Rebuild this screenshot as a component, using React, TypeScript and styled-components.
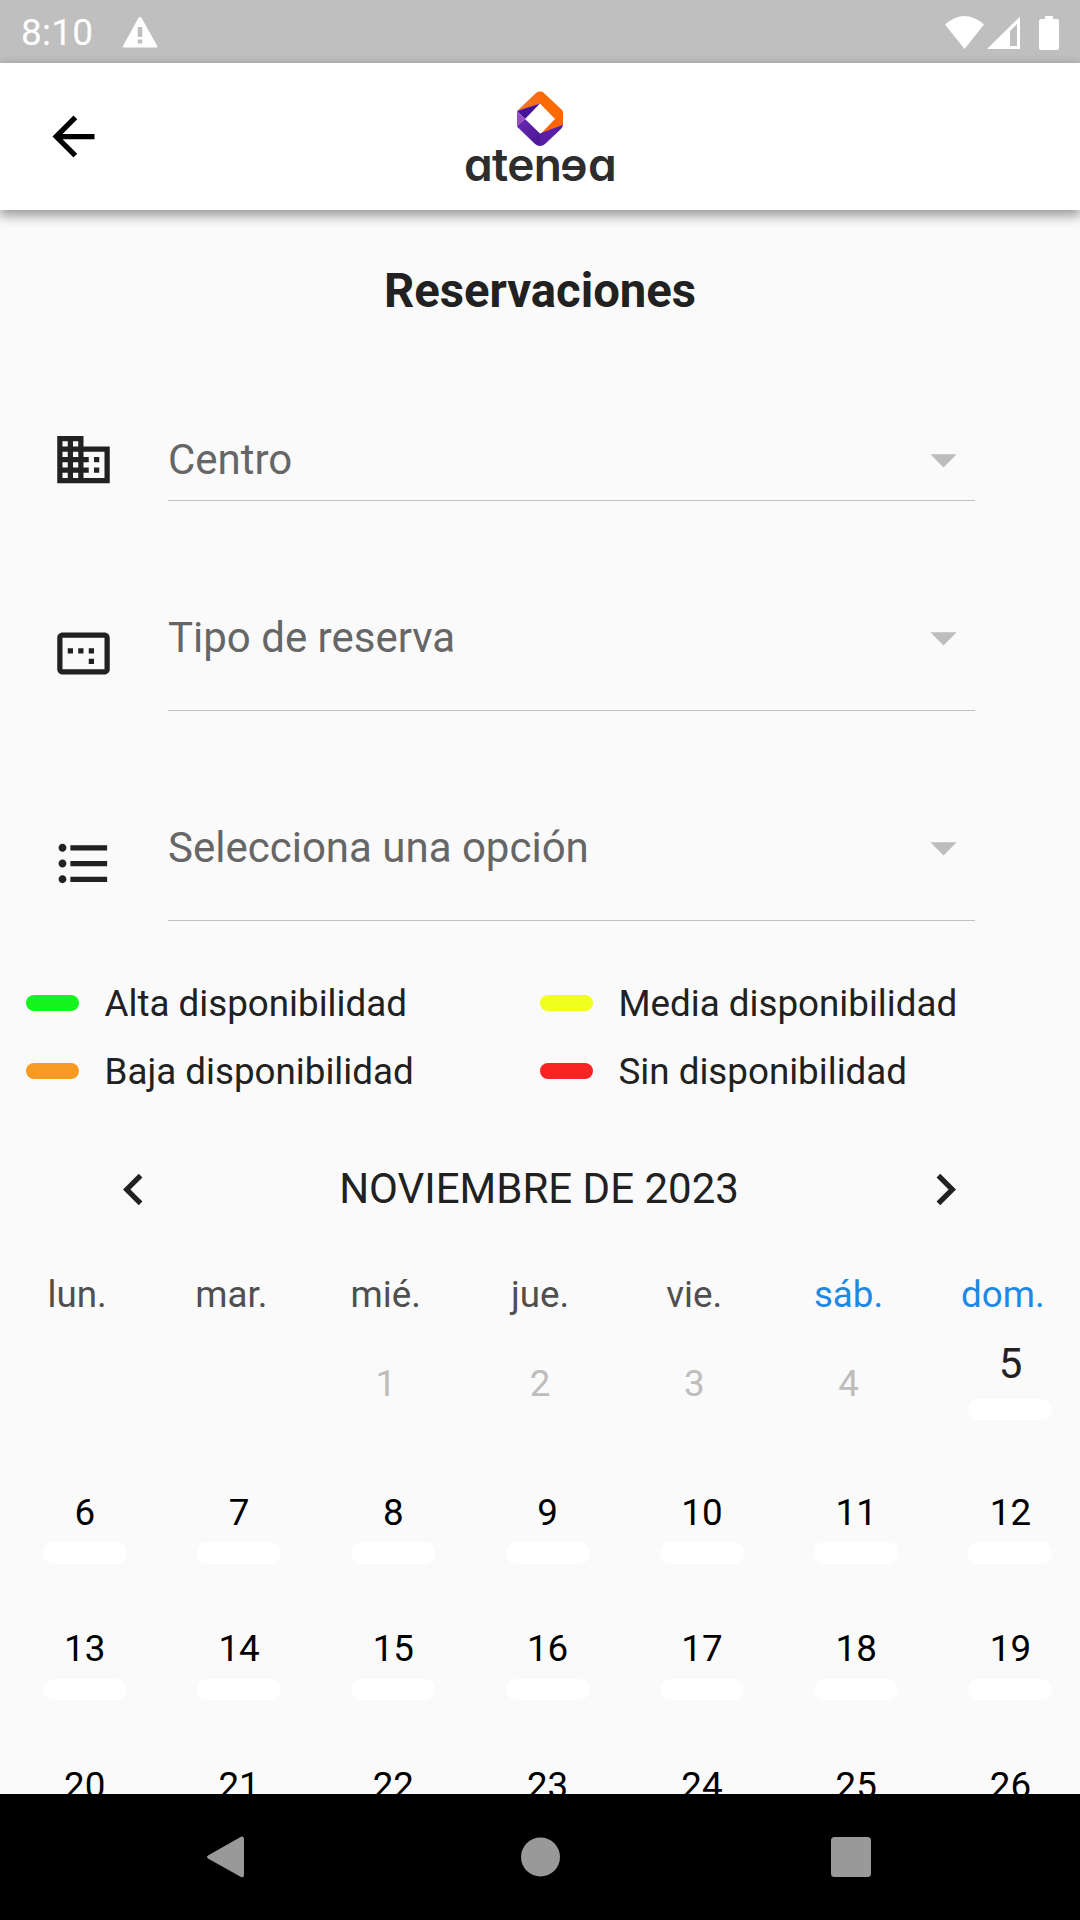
import React from "react";
import styled, { createGlobalStyle } from "styled-components";

const GlobalStyle = createGlobalStyle`
  html, body { margin: 0; padding: 0; background: #fafafa; }
  * { box-sizing: border-box; }
`;

const Screen = styled.div`
  display: flex;
  flex-direction: column;
  width: 1080px;
  height: 1920px;
  overflow: hidden;
  background: #fafafa;
  color: #212121;
  font-family: Roboto, "Liberation Sans", sans-serif;
`;

const StatusBar = styled.header`
  display: flex;
  align-items: center;
  flex: none;
  height: 63px;
  padding: 3px 21px 0;
  background: #bfbfbf;
  color: #fff;
`;

const Clock = styled.span`
  width: 101px;
  font-size: 37px;
  line-height: 60px;
  letter-spacing: 0.2px;
`;

const StatusIcons = styled.div`
  display: flex;
  align-items: center;
  margin-left: auto;
  padding-bottom: 3px;
`;

const AppBar = styled.div`
  display: grid;
  grid-template-columns: 1fr auto 1fr;
  align-items: center;
  flex: none;
  height: 147px;
  padding: 0 42px;
  background: #fff;
  color: #000;
  box-shadow: 0 5px 11px 1px rgba(0, 0, 0, 0.38);
  z-index: 1;
`;

const IconButton = styled.button`
  display: flex;
  width: 63px;
  height: 63px;
  padding: 0;
  border: 0;
  background: none;
  color: inherit;
`;

const Brand = styled.div`
  display: flex;
  flex-direction: column;
  align-items: center;
  width: 160px;
  height: 147px;
  padding-top: 28px;
`;

const Wordmark = styled.div`
  display: flex;
  justify-content: center;
  height: 40px;
  margin-top: -3px;
  color: #2d2d2d;
  font-family: Inter, "Liberation Sans", sans-serif;
  font-size: 46px;
  font-weight: 600;
  line-height: 40px;
  letter-spacing: -0.6px;
  font-feature-settings: "cv11";
`;

const Mirrored = styled.span`
  display: inline-block;
  transform: scaleX(-1);
`;

const Content = styled.main`
  flex: 1;
  min-height: 0;
  overflow: hidden;
`;

const Title = styled.h1`
  margin: 51px 0 96px;
  font-size: 47.25px;
  font-weight: 700;
  line-height: 60px;
  text-align: center;
`;

const Field = styled.div<{ $height: number }>`
  display: grid;
  grid-template-columns: 63px 807px;
  grid-template-rows: 100%;
  column-gap: 53px;
  align-items: center;
  height: ${(p) => p.$height}px;
  margin-bottom: 94px;
  padding-left: 52px;
`;

const Select = styled.div`
  display: flex;
  justify-content: space-between;
  align-items: flex-start;
  height: 100%;
  border-bottom: 1px solid #c2c2c2;
`;

const Placeholder = styled.span`
  color: #666;
  font-size: 42px;
  line-height: 85px;
`;

const ArrowSlot = styled.span`
  display: flex;
  align-items: center;
  height: 84px;
  color: #bdbdbd;
`;

const Legend = styled.div`
  display: grid;
  grid-template-columns: 514px 1fr;
  grid-auto-rows: 68px;
  margin-top: -46px;
  padding-left: 26px;
`;

const LegendItem = styled.div`
  display: flex;
  align-items: center;
  gap: 26px;
  font-size: 36.75px;
`;

const Swatch = styled.span<{ $color: string }>`
  width: 52.5px;
  height: 16px;
  border-radius: 8px;
  background: ${(p) => p.$color};
`;

const MonthBar = styled.div`
  display: flex;
  align-items: center;
  justify-content: space-between;
  height: 84px;
  margin-top: 42px;
  padding: 0 103px 0 102px;
`;

const MonthName = styled.h2`
  margin: 0;
  padding: 0 1px 2px 0;
  font-size: 42px;
  font-weight: 400;
`;

const Week = styled.div`
  display: grid;
  grid-template-columns: repeat(7, 1fr);
`;

const Weekdays = styled(Week)`
  height: 63px;
  margin-top: 32px;
  line-height: 64px;
  text-align: center;
  font-size: 36.75px;
`;

const Weekday = styled.span<{ $weekend: boolean }>`
  color: ${(p) => (p.$weekend ? "#1e88e5" : "#4f4f4f")};
`;

const Days = styled(Week)`
  grid-auto-rows: 136.5px;
`;

const PastDay = styled.div`
  padding-top: 33px;
  color: #bdbdbd;
  font-size: 36.75px;
  line-height: 50px;
  text-align: center;
`;

const Day = styled.div<{ $today?: boolean }>`
  display: flex;
  flex-direction: column;
  align-items: center;
  gap: ${(p) => (p.$today ? 9.5 : 4.5)}px;
  padding: ${(p) => (p.$today ? 13 : 25.4)}px 0 0 15.25px;
  color: ${(p) => (p.$today ? "#212121" : "#000")};
  font-size: ${(p) => (p.$today ? 42 : 36.75)}px;
  line-height: 50px;
`;

const Availability = styled.span`
  width: 84px;
  height: 21.5px;
  border-radius: 10.5px;
  background: #fff;
`;

const NavBar = styled.nav`
  display: flex;
  align-items: center;
  justify-content: space-between;
  flex: none;
  height: 126px;
  padding: 0 207px 0 206px;
  background: #000;
  color: #999;
`;

type GlyphProps = { d: string; size?: number };

function Glyph({ d, size = 63 }: GlyphProps) {
  return (
    <svg width={size} height={size} viewBox="0 0 24 24" fill="currentColor" aria-hidden>
      <path d={d} />
    </svg>
  );
}

const paths = {
  back: "M20 11H7.83l5.59-5.59L12 4l-8 8 8 8 1.41-1.41L7.83 13H20v-2z",
  business:
    "M12 7V3H2v18h20V7H12zM6 19H4v-2h2v2zm0-4H4v-2h2v2zm0-4H4V9h2v2zm0-4H4V5h2v2zm4 12H8v-2h2v2zm0-4H8v-2h2v2zm0-4H8V9h2v2zm0-4H8V5h2v2zm10 12h-8v-2h2v-2h-2v-2h2v-2h-2V9h8v10zm-2-8h-2v2h2v-2zm0 4h-2v2h2v-2z",
  ratio:
    "M16 10h-2v2h2v-2zm0 4h-2v2h2v-2zm-8-4H6v2h2v-2zm4 0h-2v2h2v-2zm8-6H4c-1.1 0-2 .9-2 2v12c0 1.1.9 2 2 2h16c1.1 0 2-.9 2-2V6c0-1.1-.9-2-2-2zm0 14H4V6h16v12z",
  list: "M4 10.5c-.83 0-1.5.67-1.5 1.5s.67 1.5 1.5 1.5 1.5-.67 1.5-1.5-.67-1.5-1.5-1.5zm0-6c-.83 0-1.5.67-1.5 1.5S3.17 7.5 4 7.5 5.5 6.83 5.5 6 4.83 4.5 4 4.5zm0 12c-.83 0-1.5.68-1.5 1.5s.68 1.5 1.5 1.5 1.5-.68 1.5-1.5-.67-1.5-1.5-1.5zM7 19h14v-2H7v2zm0-6h14v-2H7v2zm0-8v2h14V5H7z",
  drop: "M7 10l5 5 5-5z",
  left: "M15.41 7.41L14 6l-6 6 6 6 1.41-1.41L10.83 12z",
  right: "M10 6L8.59 7.41 13.17 12l-4.58 4.59L10 18l6-6z",
};

function BrandMark() {
  return (
    <svg width="48" height="56" viewBox="0 0 48 56" aria-hidden>
      <defs>
        <linearGradient id="orange" x1="0" y1="0" x2="1" y2="0">
          <stop offset="0" stopColor="#ee7a2c" />
          <stop offset="1" stopColor="#f9690e" />
        </linearGradient>
        <linearGradient id="violet" x1="0" y1="0" x2="1" y2="1">
          <stop offset="0" stopColor="#6a2bb5" />
          <stop offset="1" stopColor="#4a1492" />
        </linearGradient>
      </defs>
      <path d="M1 20L20 2Q24-.8 28 2L24 12.500 8.500 18z" fill="url(#orange)" />
      <path d="M24 .7Q27 .7 29 3L46 19Q47 20 47 22L39 28 24 12.500z" fill="#fb6a05" />
      <path d="M47 21V33.500L25 42.500 39 28z" fill="#ff6400" />
      <path d="M1 20L24 12.500 9 28z" fill="#45129a" />
      <path d="M1 20L9 28 1 35z" fill="#9a4bc0" />
      <path d="M1 35L9 28 24 42.500V55Q21.500 55 19 53L3 37.500Q1 36 1 35z" fill="url(#violet)" />
      <path d="M24 42.500L47 33.500Q47 36 45 38L29 53Q27 55 24 55z" fill="#5a1da6" />
    </svg>
  );
}

const fields = [
  { label: "Centro", icon: paths.business, height: 84 },
  { label: "Tipo de reserva", icon: paths.ratio, height: 116 },
  { label: "Selecciona una opción", icon: paths.list, height: 116 },
];

const levels = [
  { label: "Alta disponibilidad", color: "#14f51e" },
  { label: "Media disponibilidad", color: "#f0ff1e" },
  { label: "Baja disponibilidad", color: "#f79a22" },
  { label: "Sin disponibilidad", color: "#f92323" },
];

const weekdays = ["lun.", "mar.", "mié.", "jue.", "vie.", "sáb.", "dom."];
const TODAY = 5;
const LEADING_BLANKS = 2;

export default function App() {
  return (
    <>
      <GlobalStyle />
      <Screen>
        <StatusBar>
          <Clock>8:10</Clock>
          <svg width="36" height="32" viewBox="0 0 36 32" fill="currentColor" aria-hidden>
            <path
              fillRule="evenodd"
              d="M18 0Q19 0 19.600 1L35.300 29Q35.600 30.500 34.500 30.500H1.500Q.400 30.500 1 29L16.400 1Q17 0 18 0zM15.700 10V20H20.300V10zM15.700 22.500V26.500H20.300V22.500z"
            />
          </svg>
          <StatusIcons>
            <svg width="115" height="36" viewBox="944 12 115 36" fill="currentColor" aria-hidden>
              <path d="M945 22.500Q964.500 5.500 984 22.500L964.500 47z" />
              <path fillRule="evenodd" d="M1020 14.500V47H987zM1017 22L1010 29V44H1017z" />
              <path d="M1045 14H1053V17H1057Q1059 17 1059 19V46Q1059 48 1057 48H1041Q1039 48 1039 46V19Q1039 17 1041 17H1045z" />
            </svg>
          </StatusIcons>
        </StatusBar>
        <AppBar>
          <IconButton aria-label="Atrás">
            <Glyph d={paths.back} />
          </IconButton>
          <Brand>
            <BrandMark />
            <Wordmark>
              <span>aten</span>
              <Mirrored>e</Mirrored>
              <span>a</span>
            </Wordmark>
          </Brand>
        </AppBar>
        <Content>
          <Title>Reservaciones</Title>
          {fields.map((f) => (
            <Field key={f.label} $height={f.height}>
              <Glyph d={f.icon} />
              <Select>
                <Placeholder>{f.label}</Placeholder>
                <ArrowSlot>
                  <Glyph d={paths.drop} />
                </ArrowSlot>
              </Select>
            </Field>
          ))}
          <Legend>
            {levels.map((l) => (
              <LegendItem key={l.label}>
                <Swatch $color={l.color} />
                {l.label}
              </LegendItem>
            ))}
          </Legend>
          <MonthBar>
            <IconButton aria-label="Mes anterior">
              <Glyph d={paths.left} />
            </IconButton>
            <MonthName>NOVIEMBRE DE 2023</MonthName>
            <IconButton aria-label="Mes siguiente">
              <Glyph d={paths.right} />
            </IconButton>
          </MonthBar>
          <Weekdays>
            {weekdays.map((d, i) => (
              <Weekday key={d} $weekend={i > 4}>
                {d}
              </Weekday>
            ))}
          </Weekdays>
          <Days>
            {Array.from({ length: LEADING_BLANKS }, (_, i) => (
              <span key={`blank-${i}`} />
            ))}
            {Array.from({ length: 26 }, (_, i) => i + 1).map((n) =>
              n < TODAY ? (
                <PastDay key={n}>{n}</PastDay>
              ) : (
                <Day key={n} $today={n === TODAY}>
                  {n}
                  <Availability />
                </Day>
              )
            )}
          </Days>
        </Content>
        <NavBar>
          <svg width="42" height="42" viewBox="0 0 42 42" fill="currentColor" aria-hidden>
            <path d="M2 19.500L35 .700Q38 -.500 38 3V39Q38 42 35 41L2 22.500Q0 21 2 19.500z" />
          </svg>
          <svg width="40" height="40" viewBox="0 0 40 40" fill="currentColor" aria-hidden>
            <circle cx="20.500" cy="20" r="19.500" />
          </svg>
          <svg width="42" height="42" viewBox="0 0 42 42" fill="currentColor" aria-hidden>
            <rect x="0" y="1" width="40" height="40" rx="3.500" />
          </svg>
        </NavBar>
      </Screen>
    </>
  );
}
